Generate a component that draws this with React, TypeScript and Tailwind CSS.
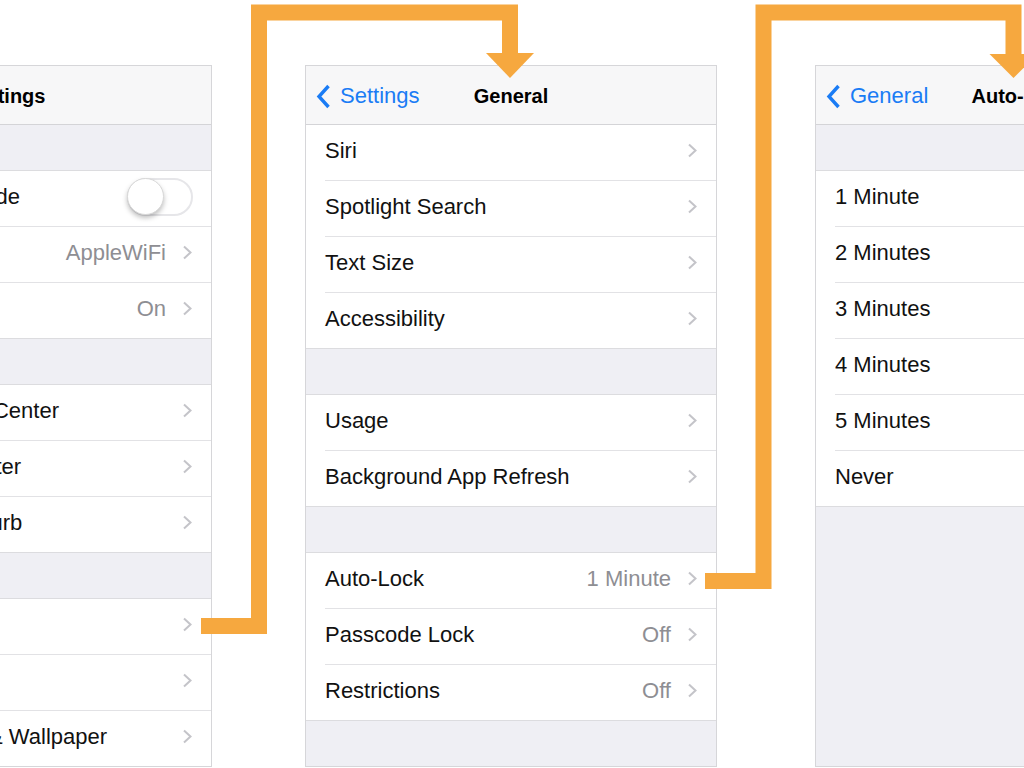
type Row = {
  label: string;
  value?: string;
  toggle?: boolean;
  chevron?: boolean;
  icon?: string;
};

type Block = { kind: "gap" } | { kind: "group"; rows: Row[] } | { kind: "fill" };

const settingsBlocks: Block[] = [
  { kind: "gap" },
  {
    kind: "group",
    rows: [
      { label: "Airplane Mode", toggle: true, icon: "bg-[#f7971d]" },
      { label: "Wi-Fi", value: "AppleWiFi", chevron: true, icon: "bg-[#1a7cf5]" },
      { label: "Bluetooth", value: "On", chevron: true, icon: "bg-[#1a7cf5]" },
    ],
  },
  { kind: "gap" },
  {
    kind: "group",
    rows: [
      { label: "Notification Center", chevron: true, icon: "bg-[#8e8e93]" },
      { label: "Control Center", chevron: true, icon: "bg-[#8e8e93]" },
      { label: "Do Not Disturb", chevron: true, icon: "bg-[#5856d6]" },
    ],
  },
  { kind: "gap" },
  {
    kind: "group",
    rows: [
      { label: "General", chevron: true, icon: "bg-[#8e8e93]" },
      { label: "Sounds", chevron: true, icon: "bg-[#ff3b30]" },
      { label: "Brightness & Wallpaper", chevron: true, icon: "bg-[#1a7cf5]" },
    ],
  },
];

const generalBlocks: Block[] = [
  {
    kind: "group",
    rows: [
      { label: "Siri", chevron: true },
      { label: "Spotlight Search", chevron: true },
      { label: "Text Size", chevron: true },
      { label: "Accessibility", chevron: true },
    ],
  },
  { kind: "gap" },
  {
    kind: "group",
    rows: [
      { label: "Usage", chevron: true },
      { label: "Background App Refresh", chevron: true },
    ],
  },
  { kind: "gap" },
  {
    kind: "group",
    rows: [
      { label: "Auto-Lock", value: "1 Minute", chevron: true },
      { label: "Passcode Lock", value: "Off", chevron: true },
      { label: "Restrictions", value: "Off", chevron: true },
    ],
  },
  { kind: "fill" },
];

const autoLockBlocks: Block[] = [
  { kind: "gap" },
  {
    kind: "group",
    rows: [
      { label: "1 Minute" },
      { label: "2 Minutes" },
      { label: "3 Minutes" },
      { label: "4 Minutes" },
      { label: "5 Minutes" },
      { label: "Never" },
    ],
  },
  { kind: "fill" },
];

const Chevron = () => (
  <svg viewBox="0 0 11 15" className="w-[11px] h-[15px] shrink-0">
    <path d="M2 1.5 L8.5 7.5 L2 13.5" fill="none" stroke="#c4c4c9" strokeWidth="2" />
  </svg>
);

const BackChevron = () => (
  <svg viewBox="0 0 15 25" className="w-[15px] h-[25px] shrink-0">
    <path d="M12.5 2 L3 12.5 L12.5 23" fill="none" stroke="#1a7cf5" strokeWidth="3.4" />
  </svg>
);

const Toggle = () => (
  <div className="w-[66px] h-[38px] rounded-full border-2 border-[#e6e6e9] bg-white flex items-center">
    <div className="w-[37px] h-[37px] -ml-[2px] rounded-full bg-white border border-[#d8d8d8] shadow-[0_3px_5px_rgba(0,0,0,0.25)]" />
  </div>
);

const SettingRow = ({ row, last }: { row: Row; last: boolean }) => (
  <div className={`h-14 shrink-0 flex bg-white ${last ? "border-b border-[#dcdcdf]" : ""}`}>
    {row.icon ? (
      <div className="w-[77px] shrink-0 flex items-center pl-[19px]">
        <span className={`w-[30px] h-[30px] rounded-[7px] ${row.icon}`} />
      </div>
    ) : (
      <div className="w-[19px] shrink-0" />
    )}
    <div
      className={`flex-1 flex items-center pr-[18px] pb-[4px] ${last ? "" : "border-b border-[#e2e2e5]"}`}
    >
      <span className="flex-1 text-[22px] leading-none text-[#111] whitespace-nowrap">
        {row.label}
      </span>
      {row.value && (
        <span className="text-[22px] leading-none text-[#8e8e93] mr-[16px]">{row.value}</span>
      )}
      {row.toggle && <Toggle />}
      {row.chevron && <Chevron />}
    </div>
  </div>
);

type PanelProps = {
  title: string;
  back?: string;
  blocks: Block[];
  className: string;
};

const Panel = ({ title, back, blocks, className }: PanelProps) => (
  <section
    className={`w-[412px] h-[702px] shrink-0 flex flex-col border border-[#d6d6d9] bg-white overflow-hidden ${className}`}
  >
    <div className="h-[59px] shrink-0 bg-[#f7f7f8] border-b border-[#d4d4d7] grid grid-cols-[1fr_auto_1fr] items-center pt-[2px]">
      <div className="flex items-center pl-[10px] gap-[9px]">
        {back && (
          <>
            <BackChevron />
            <span className="text-[22px] leading-none text-[#1a7cf5]">{back}</span>
          </>
        )}
      </div>
      <h1 className="text-[20px] font-bold leading-none text-black whitespace-nowrap">{title}</h1>
      <div />
    </div>

    {blocks.map((block, i) => {
      if (block.kind === "gap")
        return <div key={i} className="h-[46px] shrink-0 bg-[#efeff4] border-b border-[#dcdcdf]" />;
      if (block.kind === "fill") return <div key={i} className="flex-1 bg-[#efeff4]" />;
      return (
        <div key={i} className="flex flex-col">
          {block.rows.map((row, j) => (
            <SettingRow key={row.label} row={row} last={j === block.rows.length - 1} />
          ))}
        </div>
      );
    })}
  </section>
);

const Connectors = () => (
  <svg
    className="absolute left-0 top-0 w-[1024px] h-[768px] pointer-events-none"
    viewBox="0 0 1024 768"
  >
    <g fill="none" stroke="#f6a83f" strokeWidth="16" strokeLinejoin="miter" strokeLinecap="butt">
      <polyline points="201,626 259,626 259,12.5 510,12.5 510,55" />
      <polyline points="705,581 763.5,581 763.5,12.5 1013.5,12.5 1013.5,56" />
    </g>
    <polygon points="486,53 534,53 510,78" fill="#f6a83f" />
    <polygon points="989.5,54 1037.5,54 1013.5,78" fill="#f6a83f" />
  </svg>
);

export default function App() {
  return (
    <div className="relative w-[1024px] h-[768px] overflow-hidden bg-white font-['Liberation_Sans',Arial,sans-serif]">
      <div className="flex pt-[65px]">
        <Panel title="Settings" blocks={settingsBlocks} className="-ml-[200px]" />
        <Panel title="General" back="Settings" blocks={generalBlocks} className="ml-[93px]" />
        <Panel title="Auto-Lock" back="General" blocks={autoLockBlocks} className="ml-[98px]" />
      </div>
      <Connectors />
    </div>
  );
}
